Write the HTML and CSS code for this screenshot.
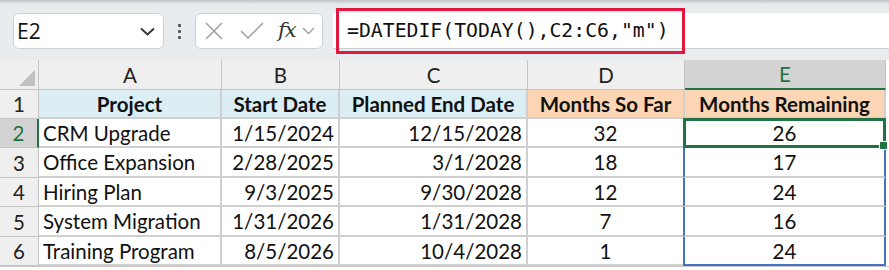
FILE: index.html
```html
<!DOCTYPE html>
<html lang="en">
<head>
    <meta charset="UTF-8">
    <title>DATEDIF months remaining</title>
    <link rel="stylesheet" href="styles.css">
</head>
<body>
    <div class="toolbar">
        <div class="namebox">
            <span>E2</span>
            <svg class="chev" width="15" height="9" viewBox="0 0 15 9"><path d="M1 1.5 L7.5 7.5 L14 1.5" fill="none" stroke="#333" stroke-width="1.8"/></svg>
        </div>
        <div class="dots"><i></i><i></i><i></i></div>
        <div class="fxbox">
            <svg width="18" height="18" viewBox="0 0 18 18"><path d="M1 1 L17 17 M17 1 L1 17" stroke="#9e9e9e" stroke-width="1.5"/></svg>
            <svg width="24" height="18" viewBox="0 0 24 18"><path d="M1 9 L8 16 L23 1" fill="none" stroke="#9e9e9e" stroke-width="1.5"/></svg>
            <span class="fx">fx</span>
            <svg width="13" height="8" viewBox="0 0 13 8"><path d="M1 1 L6.5 6.5 L12 1" fill="none" stroke="#9e9e9e" stroke-width="1.4"/></svg>
        </div>
        <div class="formula">
            <div class="formula-text">=DATEDIF(TODAY(),C2:C6,"m")</div>
        </div>
    </div>

    <div class="sheet">
        <div class="corner"></div>
        <div class="colhead">A</div>
        <div class="colhead">B</div>
        <div class="colhead">C</div>
        <div class="colhead">D</div>
        <div class="colhead active">E</div>

        <div class="rowhead">1</div>
        <div class="cell head blue">Project</div>
        <div class="cell head blue">Start Date</div>
        <div class="cell head blue">Planned End Date</div>
        <div class="cell head peach">Months So Far</div>
        <div class="cell head peach">Months Remaining</div>

        <div class="rowhead active">2</div>
        <div class="cell">CRM Upgrade</div>
        <div class="cell num">1/15/2024</div>
        <div class="cell num">12/15/2028</div>
        <div class="cell mid">32</div>
        <div class="cell mid sel first">26<span class="handle"></span></div>

        <div class="rowhead">3</div>
        <div class="cell">Office Expansion</div>
        <div class="cell num">2/28/2025</div>
        <div class="cell num">3/1/2028</div>
        <div class="cell mid">18</div>
        <div class="cell mid sel">17</div>

        <div class="rowhead">4</div>
        <div class="cell">Hiring Plan</div>
        <div class="cell num">9/3/2025</div>
        <div class="cell num">9/30/2028</div>
        <div class="cell mid">12</div>
        <div class="cell mid sel">24</div>

        <div class="rowhead">5</div>
        <div class="cell">System Migration</div>
        <div class="cell num">1/31/2026</div>
        <div class="cell num">1/31/2028</div>
        <div class="cell mid">7</div>
        <div class="cell mid sel">16</div>

        <div class="rowhead">6</div>
        <div class="cell">Training Program</div>
        <div class="cell num">8/5/2026</div>
        <div class="cell num">10/4/2028</div>
        <div class="cell mid">1</div>
        <div class="cell mid sel last">24</div>
    </div>
</body>
</html>
```

FILE: styles.css
```css
body {
    margin: 0;
    width: 889px;
    height: 270px;
    overflow: hidden;
    background: #fff;
    font-family: Lato, "Liberation Sans", sans-serif;
    color: #111;
}

/* formula bar strip */
.toolbar {
    height: 60px;
    box-sizing: border-box;
    padding-top: 13px;
    display: flex;
    align-items: flex-start;
    background: linear-gradient(#bfc2c5 0, #e6e9ec 4px, #e9ecef 10px);
}

.namebox {
    margin-left: 13px;
    width: 151px;
    height: 36px;
    box-sizing: border-box;
    background: #fff;
    border: 1px solid #cfd2d5;
    border-radius: 6px;
    display: flex;
    align-items: center;
    justify-content: space-between;
    padding: 0 8px 0 3px;
    font-family: "Open Sans", sans-serif;
    font-size: 21px;
    color: #111;
}

.dots {
    width: 31px;
    height: 36px;
    display: flex;
    flex-direction: column;
    align-items: center;
    justify-content: center;
    gap: 3px;
}

.dots i {
    width: 3px;
    height: 3px;
    background: #555;
    border-radius: 1px;
}

.fxbox {
    width: 128px;
    height: 36px;
    box-sizing: border-box;
    background: #fff;
    border: 1px solid #cfd2d5;
    border-radius: 6px;
    display: flex;
    align-items: center;
    padding: 0 5px 0 9px;
}

.fxbox svg:first-child {
    margin-right: 17px;
}

.fx {
    font-family: "DejaVu Serif", serif;
    font-style: italic;
    font-size: 21px;
    letter-spacing: -1px;
    color: #333;
    margin: -3px 6px 0 14px;
}

.formula {
    margin-left: 10px;
    flex: 1;
    height: 36px;
    box-sizing: border-box;
    background: #fff;
    border-bottom: 1px solid #c9cccf;
    display: flex;
    align-items: center;
}

.formula-text {
    margin-left: 3px;
    width: 349px;
    height: 46px;
    box-sizing: border-box;
    border: 3px solid #e0173f;
    padding-left: 8px;
    display: flex;
    align-items: center;
    font-family: "DejaVu Sans Mono", monospace;
    font-size: 19.8px;
    color: #111;
}

/* worksheet grid */
.sheet {
    display: grid;
    grid-template-columns: 39px 183px 118px 188px 157px 201px;
    grid-template-rows: 30px 29px 29px 30px 29px 30px 29px;
    background: #fff;
    border-bottom: 1px solid #c8c8c8;
    font-size: 20.5px;
}

.corner {
    background: #efefef;
    border-right: 1px solid #c4c4c4;
    border-bottom: 1px solid #c4c4c4;
    position: relative;
}

.corner::after {
    content: "";
    position: absolute;
    right: 3px;
    bottom: 3px;
    border-style: solid;
    border-width: 0 0 16px 16px;
    border-color: transparent transparent #c0c0c0 transparent;
}

.colhead {
    background: #efefef;
    border-right: 1px solid #c4c4c4;
    border-bottom: 1px solid #c4c4c4;
    display: flex;
    align-items: center;
    justify-content: center;
    color: #222;
}

.colhead.active {
    background: #d3d3d3;
    color: #217346;
    border-bottom: 2px solid #217346;
}

.rowhead {
    background: #efefef;
    border-right: 1px solid #c4c4c4;
    border-bottom: 1px solid #c4c4c4;
    display: flex;
    align-items: center;
    justify-content: center;
    color: #222;
}

.rowhead.active {
    background: #d3d3d3;
    color: #217346;
    border-right: 2px solid #217346;
}

.cell {
    border-right: 2px solid #cfcfcf;
    border-bottom: 2px solid #cfcfcf;
    display: flex;
    align-items: center;
    padding: 0 4px;
    white-space: nowrap;
    overflow: hidden;
}

.cell.head {
    font-weight: bold;
    justify-content: center;
}

.blue {
    background: #daeef3;
}

.peach {
    background: #fcd5b4;
}

.num {
    justify-content: flex-end;
}

.mid {
    justify-content: center;
}

.sel {
    border-left: 2px solid #4472c4;
    border-right: 2px solid #4472c4;
    margin-left: -2px;
}

.sel.last {
    border-bottom: 2px solid #4472c4;
}

.sel.first {
    border: 3px solid #217346;
    margin-top: -1px;
    position: relative;
    overflow: visible;
}

.handle {
    position: absolute;
    right: -5px;
    bottom: -5px;
    width: 7px;
    height: 7px;
    background: #217346;
    border: 1px solid #fff;
}
```
